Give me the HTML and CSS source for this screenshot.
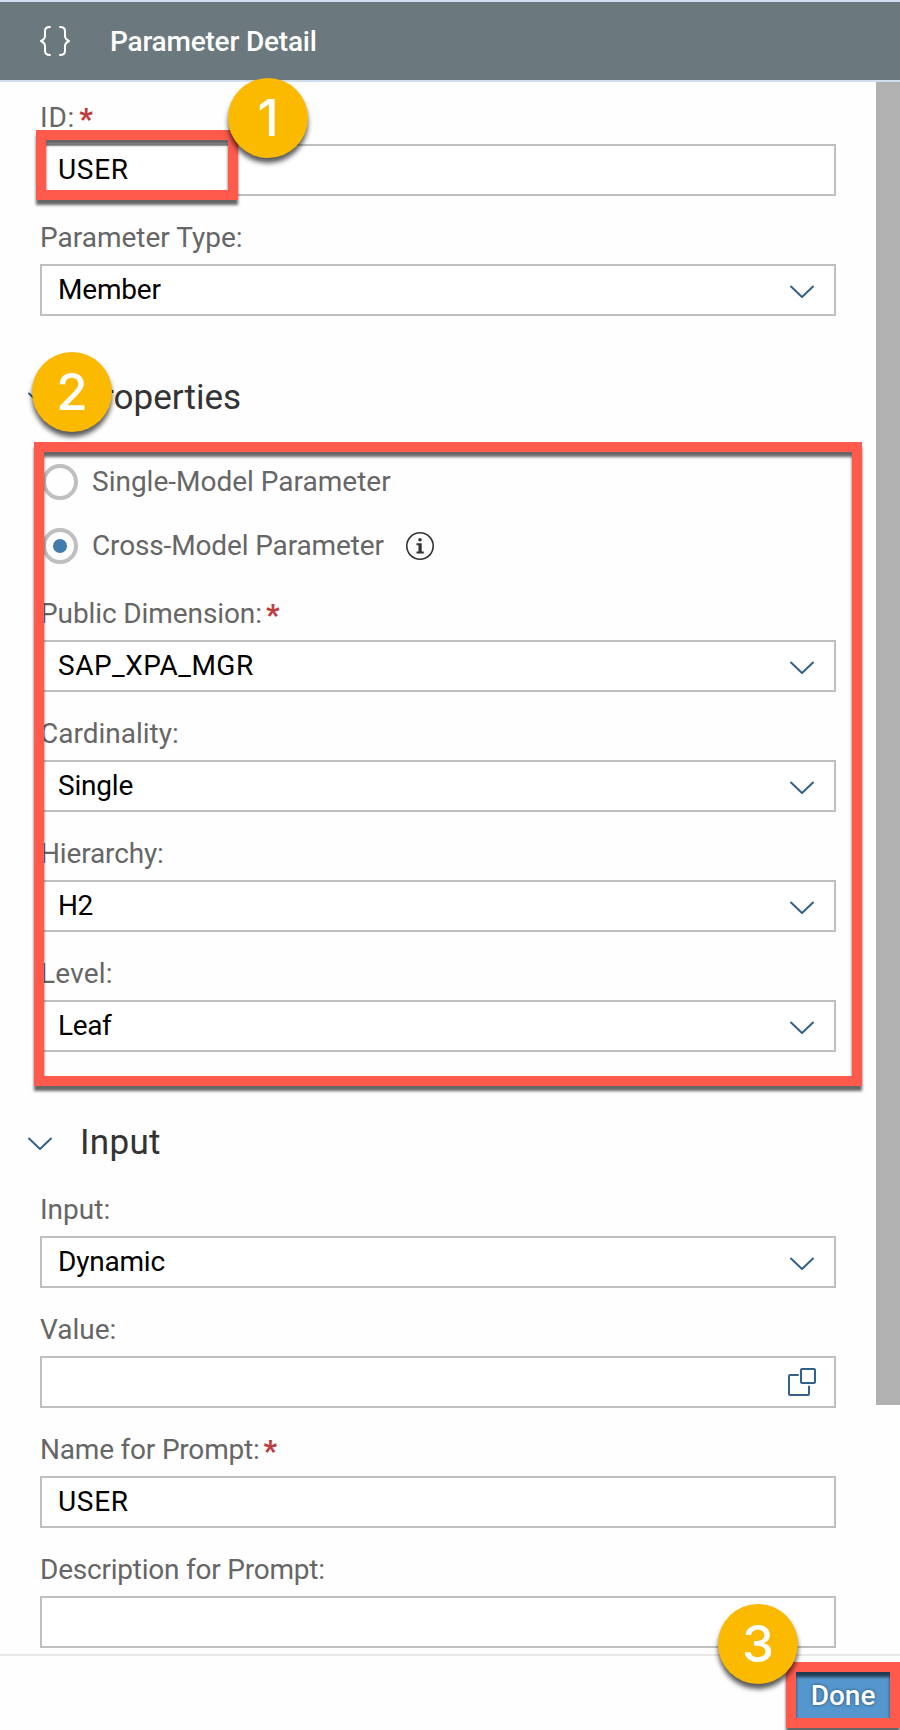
FILE: index.html
```html
<!DOCTYPE html>
<html lang="en">
<head>
<meta charset="utf-8">
<title>Parameter Detail</title>
<link rel="stylesheet" href="styles.css">
</head>
<body>
<svg width="0" height="0" class="defs">
  <symbol id="chevron" viewBox="0 0 26 14"><path d="M2 1.5 L13 12 L24 1.5" fill="none" stroke="currentColor" stroke-width="2" stroke-linecap="round" stroke-linejoin="round"/></symbol>
</svg>
<div class="panel">
  <header class="header">
    <svg class="braces" width="32" height="32" viewBox="0 0 32 32" fill="none" stroke="#fff" stroke-width="2" stroke-linecap="round" stroke-linejoin="round"><path d="M11 2 Q6 2 6 6 V11 Q6 14 2 16 Q6 18 6 21 V26 Q6 30 11 30 M21 2 Q26 2 26 6 V11 Q26 14 30 16 Q26 18 26 21 V26 Q26 30 21 30"/></svg>
    <h1 class="title">Parameter Detail</h1>
  </header>
  <main class="content">
    <div class="form">
      <div class="field"><label class="label t-id">ID:<b class="req">*</b></label><div class="box"><span class="t-user">USER</span></div></div>
      <div class="field"><label class="label">Parameter Type:</label><div class="box"><span class="t-member">Member</span><svg class="chev"><use href="#chevron"/></svg></div></div>
      <section class="section">
        <h2 class="heading"><svg class="chev"><use href="#chevron"/></svg><span>Properties</span></h2>
        <div class="radios">
          <div class="radio"><i class="dot"></i><span>Single-Model Parameter</span></div>
          <div class="radio"><i class="dot on"></i><span class="t-cross">Cross-Model Parameter</span><svg class="info" width="30" height="30" viewBox="0 0 30 30"><circle cx="15" cy="15" r="13.2" fill="none" stroke="#333" stroke-width="1.6"/><circle cx="15" cy="8.8" r="1.8" fill="#333"/><path d="M11.5 12.2 H16.7 V20.6 H18.8 V22.6 H11.5 V20.6 H13.5 V14.2 H11.5Z" fill="#333"/></svg></div>
        </div>
        <div class="field"><label class="label t-dim">Public Dimension:<b class="req">*</b></label><div class="box"><span class="t-mgr">SAP_XPA_MGR</span><svg class="chev"><use href="#chevron"/></svg></div></div>
        <div class="field"><label class="label">Cardinality:</label><div class="box"><span class="t-single">Single</span><svg class="chev"><use href="#chevron"/></svg></div></div>
        <div class="field"><label class="label t-hier">Hierarchy:</label><div class="box"><span class="t-h2">H2</span><svg class="chev"><use href="#chevron"/></svg></div></div>
        <div class="field"><label class="label t-level">Level:</label><div class="box"><span class="t-leaf">Leaf</span><svg class="chev"><use href="#chevron"/></svg></div></div>
      </section>
      <section class="section input">
        <h2 class="heading"><svg class="chev"><use href="#chevron"/></svg><span class="t-input">Input</span></h2>
        <div class="field"><label class="label">Input:</label><div class="box"><span class="t-dyn">Dynamic</span><svg class="chev"><use href="#chevron"/></svg></div></div>
        <div class="field"><label class="label">Value:</label><div class="box"><span></span><svg class="copy" width="30" height="30" viewBox="0 0 30 30" fill="none" stroke="currentColor" stroke-width="2" stroke-linejoin="round" stroke-linecap="round"><rect x="14" y="2" width="14" height="14" rx="1"/><path d="M11 8 H3 Q2 8 2 9 V27 Q2 28 3 28 H21 Q22 28 22 27 V19.5"/></svg></div></div>
        <div class="field"><label class="label t-name">Name for Prompt:<b class="req">*</b></label><div class="box"><span class="t-user">USER</span></div></div>
        <div class="field"><label class="label t-desc">Description for Prompt:</label><div class="box"></div></div>
      </section>
    </div>
    <div class="scroll"></div>
  </main>
  <footer class="footer"><button class="done">Done</button></footer>
  <div class="frame f1"></div><div class="frame f2"></div><div class="frame f3"></div>
  <div class="badge b1">1</div><div class="badge b2">2</div><div class="badge b3">3</div>
</div>
</body>
</html>
```
FILE: styles.css
```css
* { box-sizing: border-box; }
body { margin: 0; background: #fff; font-family: Roboto, "Liberation Sans", sans-serif; font-size: 28px; }
.defs { position: absolute; }
.panel { position: relative; width: 900px; height: 1730px; overflow: hidden; display: flex; flex-direction: column; background: #fefefe; }
.header { height: 82px; flex: none; display: flex; align-items: center; padding-left: 39px; gap: 39px; background: #6b787e; border-top: 2px solid #d0def0; border-bottom: 2px solid #d0def0; }
.title { margin: 0; font-size: 28px; font-weight: 500; letter-spacing: -.2px; color: #fff; }
.content { height: 1572px; flex: none; display: flex; justify-content: space-between; }
.form { width: 796px; margin-left: 40px; margin-top: -6px; }
.field { width: 796px; }
.label { display: flex; height: 68px; padding-top: 26px; line-height: 32px; color: #666; white-space: nowrap; }
.req { color: #bb3f3f; letter-spacing: 0; margin-left: 4px; padding-top: 1px; font-size: 29px; font-weight: 900; }
.box { height: 52px; border: 2px solid #bfbfbf; padding: 0 19px 0 16px; display: flex; align-items: center; justify-content: space-between; background: #fff; color: #000; }
.box span { padding-bottom: 2px; }
.chev { width: 26px; height: 14px; color: #346187; }
.box .chev { margin-top: 3px; }
.copy { color: #346187; margin-right: -2px; }
.heading { margin: 0 0 0 -13px; height: 136px; padding-top: 26px; display: flex; align-items: center; gap: 27px; font-size: 35px; font-weight: 400; color: #333; }
.input .heading { height: 116px; padding-top: 64px; }
.heading .chev { margin-top: 4px; }
.radios { height: 120px; margin-top: -2px; margin-bottom: 2px; }
.radio { height: 64px; display: flex; align-items: center; gap: 14px; padding-left: 2px; color: #666; }
.radio span { padding-bottom: 1px; }
.dot { width: 36px; height: 36px; border: 4px solid #bfbfbf; border-radius: 50%; display: flex; align-items: center; justify-content: center; }
.dot.on::after { content: ""; width: 14px; height: 14px; border-radius: 50%; background: #427cac; }
.info { margin-left: 7px; }
.t-id { letter-spacing: .8px; }
.t-user { letter-spacing: .7px; }
.t-member { letter-spacing: -.2px; }
.t-cross { letter-spacing: -.14px; }
.t-dim { letter-spacing: -.1px; }
.t-mgr { letter-spacing: .5px; }
.t-single { letter-spacing: -.2px; }
.t-hier { letter-spacing: -.15px; }
.t-h2 { letter-spacing: -.5px; }
.t-level { letter-spacing: .2px; }
.t-leaf { letter-spacing: -.4px; }
.t-input { letter-spacing: .3px; }
.t-dyn { letter-spacing: -.2px; }
.t-name { letter-spacing: -.2px; }
.t-desc { letter-spacing: -.22px; }
.scroll { width: 24px; height: 1323px; background: #b1b1b1; }
.footer { flex: 1; border-top: 2px solid #e8e8e8; display: flex; justify-content: flex-end; padding: 12px 6px 8px; }
.done { width: 102px; border: 0; background: #5496cd; color: #fff; font: 500 28px Roboto, sans-serif; text-shadow: 0 0 3px #24435c; }
.frame { position: absolute; border: 10px solid #ff5a4c; filter: drop-shadow(0 5px 1.5px rgba(0,0,0,.6)); }
.f1 { left: 36px; top: 130px; width: 202px; height: 70px; }
.f2 { left: 34px; top: 442px; width: 828px; height: 644px; }
.f3 { left: 786px; top: 1662px; width: 114px; height: 66px; }
.badge { position: absolute; width: 80px; height: 80px; border-radius: 50%; background: #fbb900; color: #fff; box-shadow: 0 5px 5px rgba(0,0,0,.65); font: 500 51px/80px Inter, sans-serif; text-align: center; }
.b1 { left: 228px; top: 78px; }
.b2 { left: 32px; top: 352px; }
.b3 { left: 718px; top: 1604px; }
```
